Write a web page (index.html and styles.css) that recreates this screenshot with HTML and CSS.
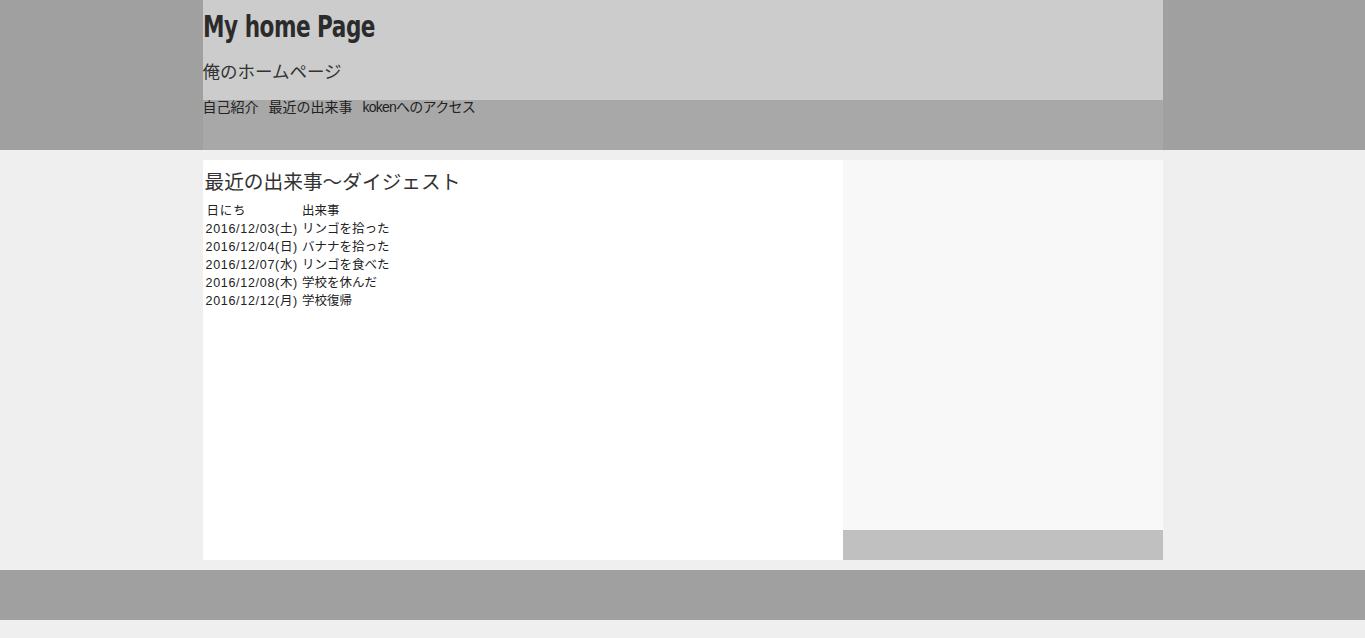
FILE: index.html
```html
<!DOCTYPE html>
<html lang="ja">
<head>
<meta charset="utf-8">
<title>My home Page</title>
<link rel="stylesheet" href="styles.css">
</head>
<body>
<header class="site-header">
  <div class="header-inner">
    <div class="brand">
      <h1 class="site-title">My home Page</h1>
      <p class="site-sub">俺のホームページ</p>
    </div>
    <nav class="nav">
      <a href="#">自己紹介</a>
      <a href="#">最近の出来事</a>
      <a href="#" class="tight">kokenへのアクセス</a>
    </nav>
  </div>
</header>
<div class="wrap">
  <main class="content">
    <h2 class="section-title">最近の出来事〜ダイジェスト</h2>
    <table class="events">
      <tr><td class="date">日にち</td><td>出来事</td></tr>
      <tr><td class="date">2016/12/03(土)</td><td>リンゴを拾った</td></tr>
      <tr><td class="date">2016/12/04(日)</td><td>バナナを拾った</td></tr>
      <tr><td class="date">2016/12/07(水)</td><td>リンゴを食べた</td></tr>
      <tr><td class="date">2016/12/08(木)</td><td>学校を休んだ</td></tr>
      <tr><td class="date">2016/12/12(月)</td><td>学校復帰</td></tr>
    </table>
  </main>
  <aside class="sidebar">
    <div class="side-body"></div>
    <div class="side-foot"></div>
  </aside>
</div>
<footer class="site-footer"></footer>
</body>
</html>
```
FILE: styles.css
```css
* { box-sizing: border-box; }
html, body { margin: 0; padding: 0; }
body {
  background: #efefef;
  color: #333;
  font-family: "Liberation Sans", "Noto Sans CJK JP", sans-serif;
}
.site-header { background: #a0a0a0; height: 150px; }
.header-inner { width: 960px; margin: 0 auto; height: 150px; display: flex; flex-direction: column; }
.brand { background: #cccccc; height: 100px; overflow: hidden; }
.site-title {
  margin: 0;
  padding-top: 10px;
  font-family: "DejaVu Sans Condensed", "DejaVu Sans", sans-serif;
  font-weight: bold;
  font-size: 30px;
  line-height: 34px;
  letter-spacing: -0.6px;
  color: #2b2b2b;
  transform: scaleX(0.8);
  transform-origin: left center;
  white-space: nowrap;
}
.site-sub {
  margin: 16px 0 0;
  font-size: 17.5px;
  line-height: 24px;
  color: #333;
}
.nav { background: #a8a8a8; height: 50px; display: flex; gap: 10px; align-items: flex-start; }
.nav a { color: #222; text-decoration: none; font-size: 14px; line-height: 14px; }
.nav a.tight { letter-spacing: -0.75px; }
.wrap { width: 960px; margin: 10px auto; display: flex; height: 400px; }
.content { width: 640px; background: #fff; padding: 8px 2px 0; }
.section-title {
  margin: 0 0 8px;
  font-weight: normal;
  font-size: 19.7px;
  line-height: 26px;
  color: #333;
  font-family: "Noto Sans CJK JP", sans-serif;
}
.events { border-collapse: collapse; font-size: 12.5px; color: #222; }
.events td { padding: 0 2px 0 0; line-height: 18px; height: 18px; vertical-align: middle; }
.events td.date { letter-spacing: 0.7px; padding-right: 4px; padding-left: 1px; }
.events tr:first-child td:first-child { padding-left: 2px; }
.sidebar { width: 320px; display: flex; flex-direction: column; }
.side-body { background: #f8f8f8; flex: 1; }
.side-foot { background: #c0c0c0; height: 30px; }
.site-footer { background: #a0a0a0; height: 50px; }
```
